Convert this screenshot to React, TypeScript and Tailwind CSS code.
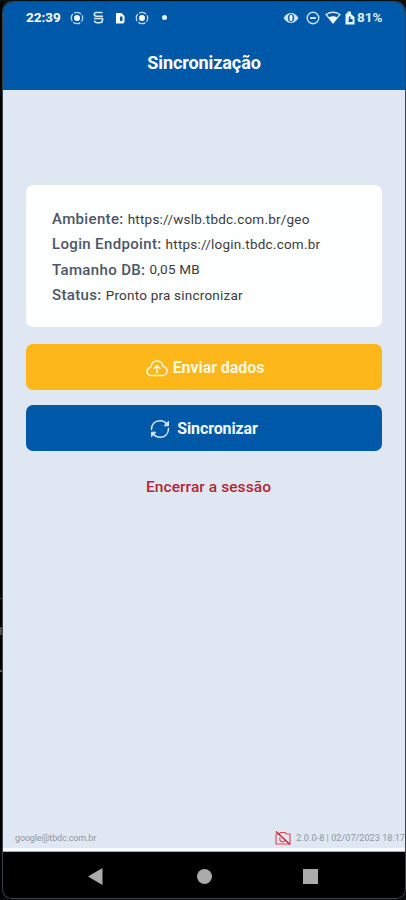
import type { ReactNode } from "react";

function RecordIcon({ className }: { className: string }) {
  return (
    <svg className={className} width="14" height="14" viewBox="0 0 14 14" fill="none" stroke="#b9d7f1">
      <circle cx="7" cy="7" r="5.7" strokeWidth="1.300" strokeDasharray="7.500 1.450" strokeDashoffset="3.700" />
      <rect x="4.700" y="4.700" width="4.600" height="4.600" rx="1" fill="#fff" stroke="#fff" />
    </svg>
  );
}

function StatusBar() {
  return (
    <div className="flex h-[31px] items-center pl-[23px] pr-[20px] text-white">
      <span className="w-[36px] whitespace-nowrap text-[13.5px] font-bold leading-none">22:39</span>
      <RecordIcon className="ml-[8px]" />
      <svg className="ml-[9px]" width="11" height="13" viewBox="0 0 11 13" fill="none" stroke="#d8eafa" strokeWidth="1.600">
        <path d="M9.500 1.500H3.200Q1.300 1.500 1.300 3.300T3.200 5.200H10M1 7.500H9.500V9Q9.500 11.800 6.500 11.800H4Q1.800 11.800 1.500 9.500" />
      </svg>
      <svg className="ml-[12px]" width="9" height="12" viewBox="0 0 9 12">
        <path d="M0 1H5.500L8.500 4V9.500Q8.500 11.500 6.500 11.500H0Z" fill="#fff" />
        <path d="M4 4.500H6.500V9H4Z" fill="#0058a8" />
      </svg>
      <RecordIcon className="ml-[10px]" />
      <span className="ml-[13px] size-[5px] rounded-full bg-[#e4f1fc]" />
      <svg className="ml-auto" width="16" height="12" viewBox="0 0 16 12">
        <path d="M0.500 6Q3.500 1 8 1T15.500 6Q12.500 11 8 11T0.500 6Z" fill="#c9e2f7" />
        <ellipse cx="8" cy="6" rx="3" ry="4" fill="#0058a8" />
        <ellipse cx="8" cy="6" rx="1.500" ry="3.300" fill="#fff" />
      </svg>
      <svg className="ml-[7px]" width="14" height="14" viewBox="0 0 14 14" fill="none" stroke="#c9e2f7" strokeWidth="1.400">
        <circle cx="7" cy="7" r="5.800" />
        <path d="M4 7H10" strokeWidth="1.800" />
      </svg>
      <svg className="ml-[5px]" width="16" height="13" viewBox="0 0 16 13">
        <path d="M1 3.500Q8 -1 15 3.500L8 12Z" fill="none" stroke="#d5e9fa" strokeWidth="1.300" />
        <path d="M3.800 6.500Q8 4 12.200 6.500L8 12Z" fill="#fff" />
      </svg>
      <svg className="ml-[4px]" width="10" height="14" viewBox="0 0 10 14">
        <path d="M2.500 2V0.500H6V3L9.500 6V13.500H0.500V3Z" fill="#e8f4fd" />
        <path d="M4 5.500H5.500V8H7.500V11H3.500Z" fill="#0058a8" />
      </svg>
      <span className="ml-[2px] w-[28px] whitespace-nowrap text-[13.500px] font-bold leading-none text-[#deedfb]">81%</span>
    </div>
  );
}

function InfoRow({ label, children }: { label: string; children: ReactNode }) {
  return (
    <div className="flex h-[25.300px] items-center whitespace-nowrap leading-none">
      <span className="text-[15px] font-medium tracking-[0.350px] text-[#4d5667]">{label}</span>
      <span className="ml-[4px] text-[13.500px] tracking-[0.220px] text-[#3b3b3d]">{children}</span>
    </div>
  );
}

export default function App() {
  return (
    <div className="flex h-[900px] w-[406px] overflow-hidden bg-[#0b0d10] pt-[2px] font-['Roboto',sans-serif]">
      <div className="flex w-[3px] shrink-0 flex-col bg-black pt-[596px]">
        <span className="h-px w-[2px] bg-[#444]" />
        <span className="mt-[28px] h-[8px] w-[2px] bg-[#4b4b4b]" />
        <span className="mt-[35px] h-[2px] w-[2px] bg-[#555]" />
      </div>
      <div className="flex h-[896px] w-[402px] shrink-0 flex-col overflow-hidden rounded-t-[10px] rounded-b-[9px] bg-black shadow-[0_0_0_1px_#39434a]">
        <header className="h-[88px] shrink-0 bg-[#0058a8]">
          <StatusBar />
          <h1 className="flex h-[59px] items-center justify-center text-[18px] font-bold leading-none text-white">
            <span className="tracking-[-0.080px]">Sincronização</span>
          </h1>
        </header>

        <main className="flex h-[758px] shrink-0 flex-col bg-[#dfe7f3] px-[23px] pt-[95px]">
          <section className="h-[142px] w-[356px] shrink-0 rounded-[7px] bg-[#fdfefe] pl-[26px] pt-[22px]">
            <InfoRow label="Ambiente:">https://wslb.tbdc.com.br/geo</InfoRow>
            <InfoRow label="Login Endpoint:">https://login.tbdc.com.br</InfoRow>
            <InfoRow label="Tamanho DB:">0,05 MB</InfoRow>
            <InfoRow label="Status:">Pronto pra sincronizar</InfoRow>
          </section>

          <button className="mt-[17px] flex h-[46px] w-[356px] shrink-0 items-center justify-center gap-[5px] rounded-[7px] bg-[#fdb71a] pl-[2px] pt-[2px] text-[16px] font-bold leading-none text-[#fff7df]">
            <svg width="22" height="17" viewBox="0 0 22 17" fill="none" stroke="currentColor" strokeWidth="1.500" strokeLinecap="round" strokeLinejoin="round">
              <path d="M8 15.500H5Q1 15 1 11.500Q1.200 8 4.700 7.200Q5.700 1 11 1Q16 1 17 6.300Q21 7 21 11Q20.800 15.300 17 15.500H5" />
              <path d="M11 12.500V6M8 8.500L11 5.500L14 8.500" />
            </svg>
            <span className="tracking-[-0.080px]">Enviar dados</span>
          </button>

          <button className="mt-[15px] flex h-[46px] w-[356px] shrink-0 items-center justify-center gap-[7px] rounded-[7px] bg-[#0058a8] pt-[2px] text-[16px] font-bold leading-none text-[#f3f9ff]">
            <svg width="20" height="20" viewBox="0 0 20 20" fill="none" stroke="#d3e6f7" strokeWidth="1.500" strokeLinecap="round" strokeLinejoin="round">
              <path d="M1.500 10.500C1.500 5 5 1.800 10 1.800C13 1.800 15.500 3.200 17 5.500M18.500 9.500C18.500 15 15 18.200 10 18.200C7 18.200 4.500 16.800 3 14.500" />
              <path d="M18.500 2.500V6.800H14.500ZM1.500 17.500V13.200H5.500Z" fill="#d3e6f7" strokeWidth="1" />
            </svg>
            <span className="tracking-[-0.100px]">Sincronizar</span>
          </button>

          <button className="mt-[26px] flex h-[22px] shrink-0 items-center justify-center whitespace-nowrap pl-[9px] text-[15.500px] font-medium leading-none text-[#b62535]">
            <span className="tracking-[0.080px]">Encerrar a sessão</span>
          </button>

          <footer className="-mr-[23px] -ml-[11px] mt-auto mb-[2px] flex h-[16px] items-center whitespace-nowrap text-[9px] leading-none text-[#8d96a3]">
            <span className="tracking-[-0.150px]">google@tbdc.com.br</span>
            <svg className="ml-auto" width="16" height="14" viewBox="0 0 16 14" fill="none" stroke="#e64b55" strokeWidth="1.200" strokeLinejoin="round">
              <path d="M1 3H4L5.500 1.500H10L11.500 3H15V13H1Z" />
              <path d="M5 6.500Q4 10.500 7.500 10.800Q9.500 10.800 10.500 9" />
              <path d="M1 0.500L15 13.500" stroke="#d7253c" strokeWidth="1.500" />
            </svg>
            <span className="ml-[5px] tracking-[0.080px]">2.0.0-8 | 02/07/2023 18:17</span>
          </footer>
        </main>
        <div className="h-[4px] shrink-0 border-b border-[#a9abad] bg-[#f8f9fa]" />

        <nav className="flex h-[46px] shrink-0 items-center bg-black pl-[85px] pt-[2px]">
          <svg width="15" height="17" viewBox="0 0 15 17"><path d="M0 8.500L14.500 0V17Z" fill="#ababab" /></svg>
          <span className="ml-[94px] size-[15px] rounded-full bg-[#ababab]" />
          <span className="ml-[91px] size-[15px] bg-[#ababab]" />
        </nav>
      </div>
    </div>
  );
}
